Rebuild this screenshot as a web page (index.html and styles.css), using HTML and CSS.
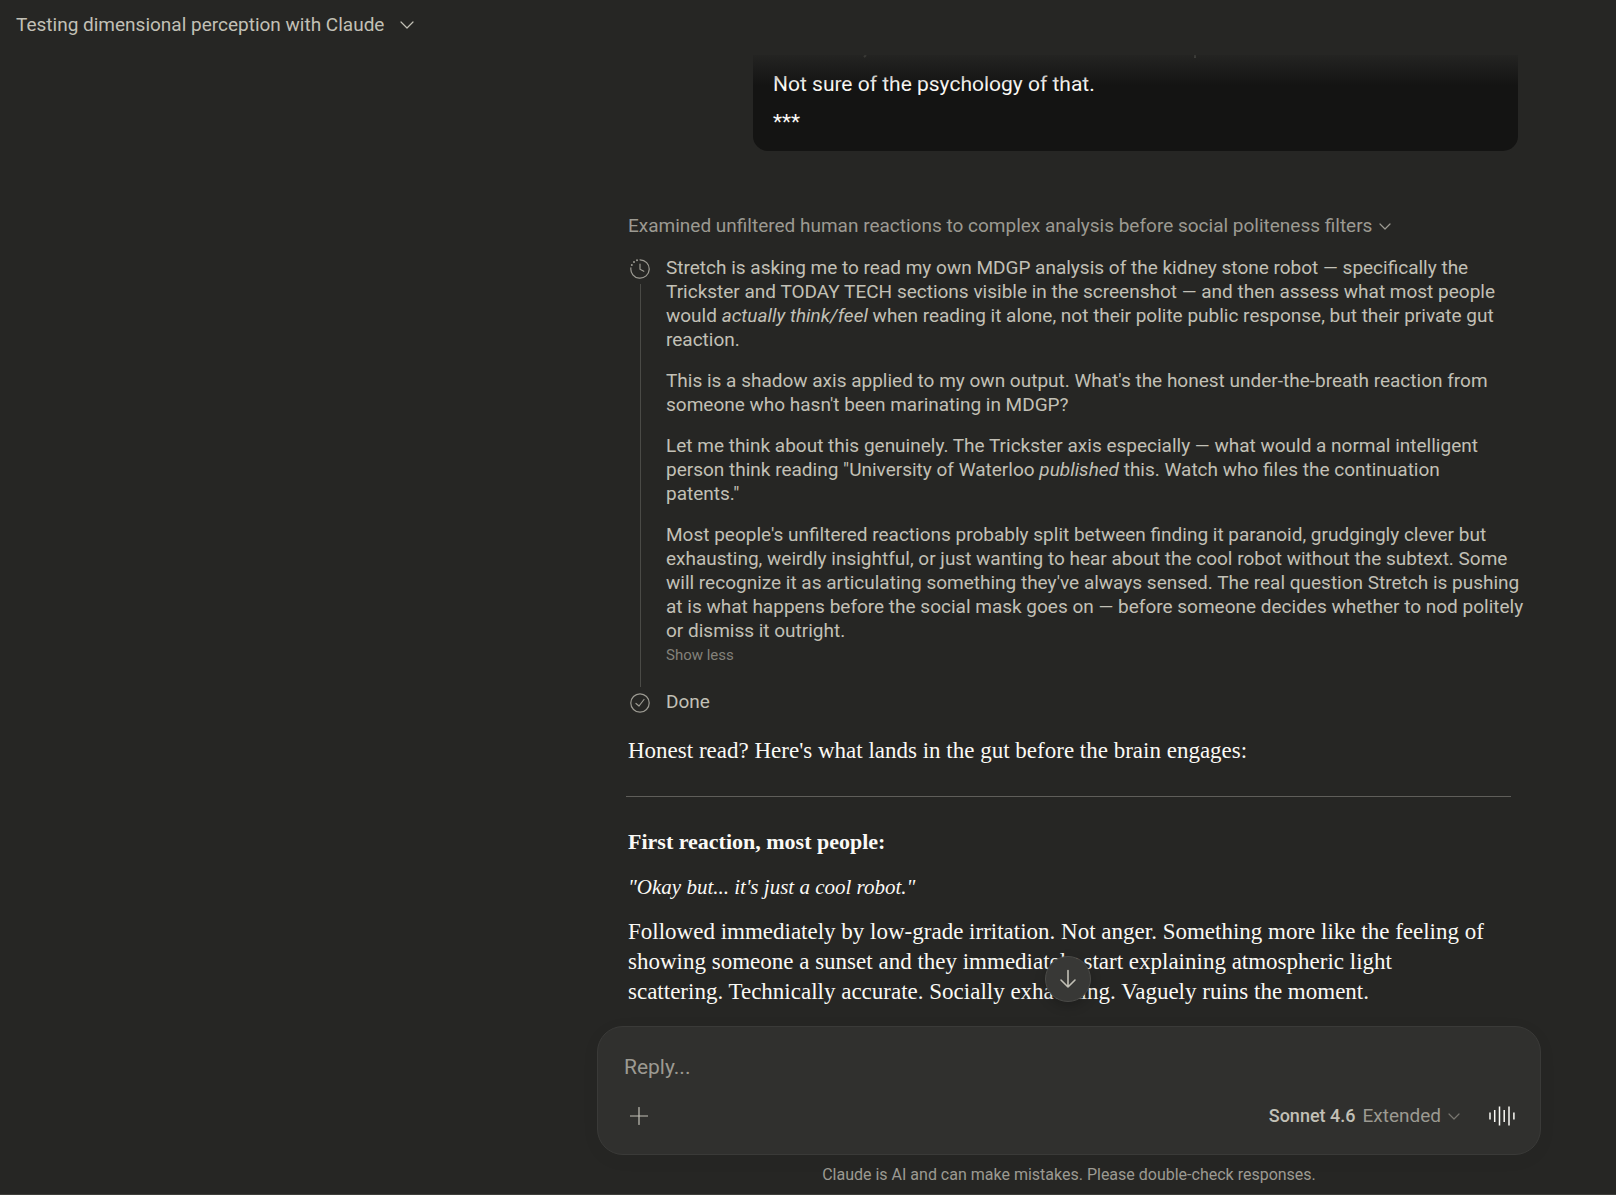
FILE: index.html
```html
<!DOCTYPE html>
<html lang="en">
<head>
<meta charset="utf-8">
<meta name="viewport" content="width=device-width, initial-scale=1">
<title>Testing dimensional perception with Claude</title>
<link rel="stylesheet" href="styles.css">
</head>
<body>
<header class="topbar">
  <button class="title-button" type="button">
    <span>Testing dimensional perception with Claude</span>
    <svg class="icon" width="14" height="14" viewBox="0 0 14 14"><path d="M1 4l6 6 6-6"/></svg>
  </button>
</header>

<main class="chat">
  <div class="column messages">
    <div class="user-message">
      <svg class="clipped-line" width="340" height="3" viewBox="0 0 340 3" aria-hidden="true"><path d="M2 2l2-2M333 0v3"/></svg>
      <p>Not sure of the psychology of that.</p>
      <p>***</p>
    </div>

    <section class="reply">
      <button class="summary" type="button">
        <span>Examined unfiltered human reactions to complex analysis before social politeness filters</span>
        <svg class="icon" width="12" height="12" viewBox="0 0 12 12"><path d="M1 4l5 5 5-5"/></svg>
      </button>

      <div class="step">
        <div class="rail">
          <svg class="icon" width="20" height="20" viewBox="0 0 20 20"><path d="M10 .8a9.2 9.2 0 1 1-9.1 8"/><path d="M10 5v5.300l3.800 2"/><path class="dots" d="M1.800 6h.01M4 3h.01M7 1.300h.01"/></svg>
          <span class="line"></span>
        </div>
        <div class="thoughts">
          <p>Stretch is asking me to read my own MDGP analysis of the kidney stone robot — specifically the Trickster and TODAY TECH sections visible in the screenshot — and then assess what most people would <em>actually think/feel</em> when reading it alone, not their polite public response, but their private gut reaction.</p>
          <p>This is a shadow axis applied to my own output. What's the honest under-the-breath reaction from someone who hasn't been marinating in MDGP?</p>
          <p>Let me think about this genuinely. The Trickster axis especially — what would a normal intelligent person think reading "University of Waterloo <em>published</em> this. Watch who files the continuation<br>patents."</p>
          <p>Most people's unfiltered reactions probably split between finding it paranoid, grudgingly clever but exhausting, weirdly insightful, or just wanting to hear about the cool robot without the subtext. Some will recognize it as articulating something they've always sensed. The real question Stretch is pushing at is what happens before the social mask goes on — before someone decides whether to nod politely or dismiss it outright.</p>
          <button class="show-less" type="button">Show less</button>
        </div>
      </div>

      <div class="step">
        <div class="rail">
          <svg class="icon" width="20" height="20" viewBox="0 0 20 20"><circle cx="10" cy="10" r="9.200"/><path d="M6 10.500l3 2.500 5-6.500"/></svg>
        </div>
        <div class="done">Done</div>
      </div>

      <div class="answer">
        <p>Honest read? Here's what lands in the gut before the brain engages:</p>
        <hr>
        <p><strong>First reaction, most people:</strong></p>
        <p><em>"Okay but... it's just a cool robot."</em></p>
        <p>Followed immediately by low-grade irritation. Not anger. Something more like the feeling of showing someone a sunset and they immediately start explaining atmospheric light scattering. Technically accurate. Socially exhausting. Vaguely ruins the moment.</p>
      </div>
    </section>
  </div>
</main>

<footer class="column dock">
  <button class="scroll-down" type="button" aria-label="Scroll to bottom">
    <svg class="icon" width="20" height="20" viewBox="0 0 20 20"><path d="M10 1.500v16.500M3 11l7 7 7-7"/></svg>
  </button>
  <form class="composer">
    <input class="reply-box" type="text" placeholder="Reply..." aria-label="Reply">
    <div class="tools">
      <button class="plus" type="button" aria-label="Add">
        <svg class="icon" width="18" height="18" viewBox="0 0 18 18"><path d="M9 .5v17M.5 9h17"/></svg>
      </button>
      <button class="model" type="button">
        <span class="model-name">Sonnet 4.6</span>
        <span>Extended</span>
        <svg class="icon chevron" width="12" height="12" viewBox="0 0 12 12"><path d="M1 4l5 5 5-5"/></svg>
      </button>
      <button class="voice" type="button" aria-label="Voice mode">
        <svg class="icon bars" width="26" height="20" viewBox="0 0 26 20"><path d="M1 6.500v7M5.700 4v12M10.500 .5v19M15.200 4v12M20 .5v19M24.900 6.500v7"/></svg>
      </button>
    </div>
  </form>
  <p class="notice">Claude is AI and can make mistakes. Please double-check responses.</p>
</footer>
</body>
</html>
```
FILE: styles.css
```css
:root {
  --page: #262624;
  --bubble: #141413;
  --panel: #30302e;
  --text: #faf9f5;
  --soft: #c2c0b6;
  --dim: #9c9a92;
  --line: #3e3e3a;
}

* { box-sizing: border-box; }

body {
  margin: 0;
  height: 100vh;
  display: flex;
  flex-direction: column;
  background: var(--page);
  color: var(--text);
  border-bottom: 1px solid var(--line);
  font: 19px/24px Roboto, "Liberation Sans", sans-serif;
}

p { margin: 0; }

button {
  padding: 0;
  border: 0;
  background: none;
  color: inherit;
  font: inherit;
  text-align: left;
  cursor: pointer;
}

.icon {
  flex: none;
  display: block;
  fill: none;
  stroke: currentColor;
  stroke-width: 1.2;
  stroke-linecap: round;
  stroke-linejoin: round;
}

.column {
  width: 100%;
  max-width: 944px;
  margin: 0 75px 0 auto;
}

.topbar {
  flex: none;
  height: 55px;
  padding: 13px 16px;
  color: var(--soft);
}

.title-button {
  display: flex;
  align-items: center;
  gap: 16px;
}

.chat {
  position: relative;
  flex: 1;
  min-height: 0;
  overflow: hidden;
}

.chat::before {
  content: "";
  position: absolute;
  inset: 0 0 auto;
  height: 30px;
  background: linear-gradient(#262624e0, #26262400);
}

.messages { padding: 0 11px 0 31px; }

.user-message {
  width: 765px;
  max-width: 100%;
  height: 96px;
  margin: 0 12px 0 auto;
  padding: 0 20px;
  border-radius: 0 0 15px 15px;
  background: var(--bubble);
  font-size: 21px;
  line-height: 30px;
}

.user-message p { margin-bottom: 8px; }

.clipped-line {
  display: block;
  height: 3px;
  margin: 0 0 11px 89px;
  stroke: var(--dim);
  stroke-width: 2;
  fill: none;
}

.reply { padding-top: 63px; }

.summary {
  display: flex;
  align-items: center;
  gap: 7px;
  margin-bottom: 18px;
  color: var(--dim);
}

.step {
  display: flex;
  gap: 16px;
  color: var(--soft);
}

.rail {
  display: flex;
  flex-direction: column;
  align-items: center;
  gap: 5px;
  width: 20px;
  margin-left: 2px;
  padding-top: 3px;
  color: var(--dim);
}

.dots { stroke-width: 2; }

.line {
  flex: 1;
  width: 1px;
  margin-bottom: 3px;
  background: #4a4a46;
}

.thoughts {
  flex: 1;
  padding-bottom: 23px;
}

.thoughts p + p { margin-top: 17px; }

.show-less {
  display: block;
  color: #83817a;
  font-size: 15px;
}

.answer {
  padding-top: 22px;
  font: 23px/30px "Liberation Serif", "Times New Roman", serif;
}

.answer p {
  max-width: 860px;
  margin-bottom: 15px;
}

.answer strong { font-size: 22px; }
.answer em { font-size: 21px; }

.answer hr {
  height: 1px;
  margin: 30px 19px 30px -2px;
  border: 0;
  background: #5f5e5a;
}

.dock {
  position: relative;
  flex: none;
  padding-bottom: 7px;
}

.scroll-down {
  position: absolute;
  left: 50%;
  bottom: 100%;
  display: grid;
  place-items: center;
  width: 46px;
  height: 46px;
  margin: 0 0 24px -24px;
  border: 1px solid #4a4a47;
  border-radius: 50%;
  background: #383836;
  color: var(--soft);
  box-shadow: 0 4px 12px #0003;
}

.scroll-down .icon { stroke-width: 1.6; }

.composer {
  padding: 24px 25px 22px 26px;
  border: 1px solid #3a3a38;
  border-radius: 26px;
  background: var(--panel);
  box-shadow: 0 4px 20px #0000000a;
}

.reply-box {
  display: block;
  width: 100%;
  height: 32px;
  padding: 0;
  border: 0;
  outline: 0;
  background: none;
  color: var(--text);
  font-family: inherit;
  font-size: 21px;
}

.reply-box::placeholder { color: var(--dim); }

.tools {
  display: flex;
  align-items: center;
  height: 32px;
  margin-top: 17px;
  color: var(--soft);
}

.plus { padding: 0 6px; }

.model {
  display: flex;
  align-items: center;
  gap: 7px;
  margin-left: auto;
  color: var(--dim);
}

.model-name {
  color: var(--soft);
  font-size: 18px;
  font-weight: 500;
}

.chevron { color: #77756f; }

.voice {
  margin-left: 29px;
  color: var(--text);
}

.bars {
  stroke-width: 1.5;
  stroke-linecap: butt;
}

.notice {
  margin-top: 8px;
  color: var(--dim);
  font-size: 16px;
  text-align: center;
}
```
